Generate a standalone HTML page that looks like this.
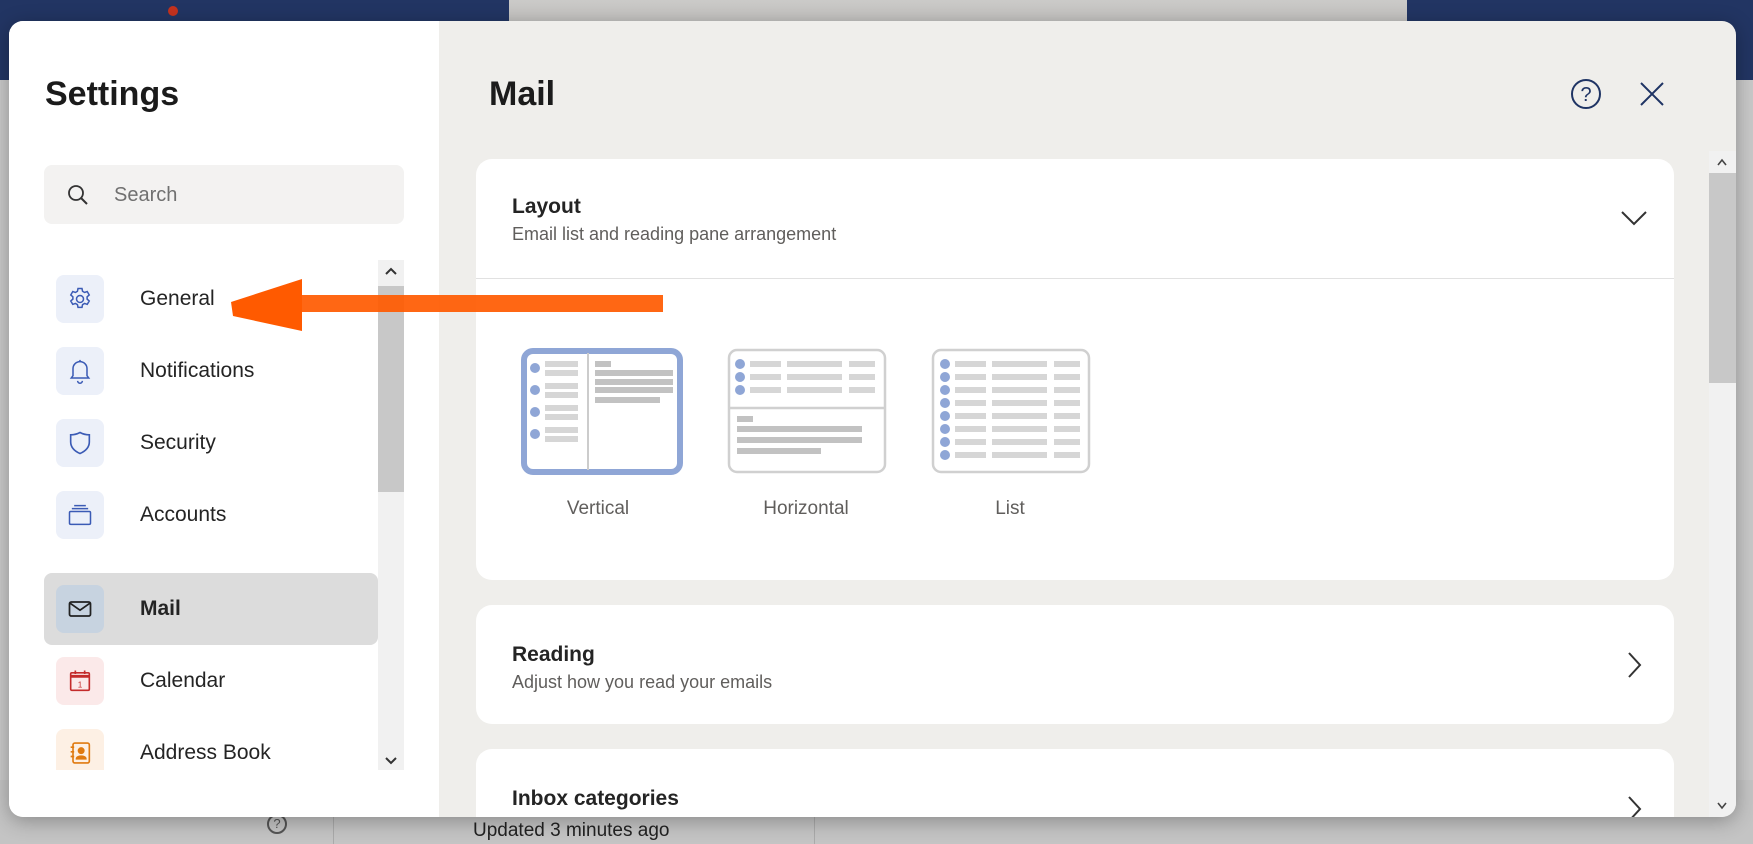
<!DOCTYPE html>
<html><head><meta charset="utf-8"><style>
*{box-sizing:border-box;margin:0;padding:0}
body{width:1753px;height:844px;overflow:hidden;position:relative;background:#c9c9c9;font-family:"Liberation Sans",sans-serif;color:#242424}
.abs{position:absolute}
.nav{left:0;top:0;width:1753px;height:80px;background:#223563}
.topsearch{left:509px;top:0;width:898px;height:40px;background:linear-gradient(#cbcac8,#bdbcba);border-radius:0 0 14px 14px}
.bottom{left:0;top:780px;width:1753px;height:64px;background:#c4c4c4}
.modal{left:9px;top:21px;width:1727px;height:796px;border-radius:14px;overflow:hidden;background:#efeeeb;box-shadow:0 4px 20px rgba(0,0,0,.3)}
.left{left:0;top:0;width:430px;height:796px;background:#fff}
.navitem{position:absolute;left:47px;width:48px;height:48px;border-radius:8px;background:#ecf0f9;display:flex;align-items:center;justify-content:center}
.lbl{position:absolute;left:131px;font-size:21px;color:#242424;line-height:24px}
.card{position:absolute;left:467px;width:1198px;background:#fff;border-radius:16px}
.ct{position:absolute;left:36px;font-size:21px;font-weight:bold;color:#242424}
.cs{position:absolute;left:36px;font-size:18px;color:#605e5c}
.tl{position:absolute;font-size:19px;color:#605e5c;text-align:center;width:180px}
</style></head><body>
<div class="abs nav"></div>
<div class="abs topsearch"></div>
<div class="abs" style="left:168px;top:6px;width:10px;height:10px;border-radius:50%;background:#c4321e"></div>
<div class="abs bottom"></div>
<div class="abs" style="left:333px;top:780px;width:1px;height:64px;background:#aaa"></div>
<div class="abs" style="left:814px;top:780px;width:1px;height:64px;background:#aaa"></div>
<div class="abs" style="left:473px;top:820px;font-size:19px;color:#222">Updated 3 minutes ago</div>
<div class="abs" style="left:267px;top:814px;width:20px;height:20px;border:2px solid #555;border-radius:50%;font-size:13px;text-align:center;line-height:16px;color:#555">?</div>

<div class="abs modal">
 <div class="abs left">
  <div class="abs" style="left:36px;top:54px;font-size:34px;font-weight:bold;color:#1b1b1b">Settings</div>
  <div class="abs" style="left:35px;top:144px;width:360px;height:59px;background:#f3f2f1;border-radius:8px">
   <svg class="abs" style="left:22px;top:18px" width="24" height="24" viewBox="0 0 24 24"><circle cx="10" cy="10" r="7" fill="none" stroke="#333" stroke-width="1.8"/><path d="M15 15l6 6" stroke="#333" stroke-width="2"/></svg>
   <div class="abs" style="left:70px;top:19px;font-size:20px;color:#707070">Search</div>
  </div>
  <div class="abs" style="left:0;top:239px;width:430px;height:510px;overflow:hidden">
   <div class="navitem" style="top:15px"><svg width="28" height="28" viewBox="0 0 24 24" fill="none" stroke="#3b5bb5" stroke-width="1.3"><circle cx="12" cy="12" r="3"/><path d="M10.3 3h3.4l.5 2.4 1.7 1 2.3-.8 1.7 2.9-1.8 1.6v2l1.8 1.6-1.7 2.9-2.3-.8-1.7 1-.5 2.4h-3.4l-.5-2.4-1.7-1-2.3.8-1.7-2.9 1.8-1.6v-2L4.1 8.5l1.7-2.9 2.3.8 1.7-1z"/></svg></div>
   <div class="lbl" style="top:27px">General</div>
   <div class="navitem" style="top:87px"><svg width="28" height="28" viewBox="0 0 24 24" fill="none" stroke="#3b5bb5" stroke-width="1.3"><path d="M6 16V10a6 6 0 0112 0v6l1.5 2h-15z"/><path d="M10 20.5a2 2 0 004 0"/><path d="M12 2.5v1.5"/></svg></div>
   <div class="lbl" style="top:99px">Notifications</div>
   <div class="navitem" style="top:159px"><svg width="28" height="28" viewBox="0 0 24 24" fill="none" stroke="#3b5bb5" stroke-width="1.4"><path d="M12 3c3 1.6 5.5 2 8 2v6c0 5-3.5 8-8 10-4.5-2-8-5-8-10V5c2.5 0 5-.4 8-2z"/></svg></div>
   <div class="lbl" style="top:171px">Security</div>
   <div class="navitem" style="top:231px"><svg width="30" height="28" viewBox="0 0 24 24" fill="none" stroke="#3b5bb5" stroke-width="1.3"><rect x="3" y="9" width="18" height="11" rx="1"/><path d="M5 6.5h14M7 4h10"/></svg></div>
   <div class="lbl" style="top:243px">Accounts</div>
   <div class="abs" style="left:35px;top:313px;width:334px;height:72px;background:#dcdcdc;border-radius:8px"></div>
   <div class="navitem" style="top:325px;background:#c7d3e0"><svg width="30" height="28" viewBox="0 0 24 24" fill="none" stroke="#222" stroke-width="1.5"><rect x="3" y="6" width="18" height="12" rx="1.5"/><path d="M3.5 7l8.5 6 8.5-6"/></svg></div>
   <div class="lbl" style="top:337px;font-weight:bold">Mail</div>
   <div class="navitem" style="top:397px;background:#fbe9e9"><svg width="28" height="28" viewBox="0 0 24 24" fill="none" stroke="#c42b2b" stroke-width="1.4"><rect x="4" y="5" width="16" height="15" rx="1"/><path d="M4 8h16" stroke-width="2.5"/><path d="M8 3v3M16 3v3"/><text x="12" y="17.5" font-size="7" fill="#c42b2b" stroke="none" text-anchor="middle" font-family="Liberation Sans">1</text></svg></div>
   <div class="lbl" style="top:409px">Calendar</div>
   <div class="navitem" style="top:469px;background:#fdf0e4"><svg width="28" height="28" viewBox="0 0 24 24" fill="none" stroke="#e07a10" stroke-width="1.4"><rect x="6" y="3.5" width="14" height="17" rx="1.5"/><circle cx="13" cy="10" r="2.3" fill="#e07a10"/><path d="M9 17c0-3 8-3 8 0z" fill="#e07a10"/><path d="M4 7h3M4 11h3M4 15h3"/></svg></div>
   <div class="lbl" style="top:481px">Address Book</div>
  </div>
  <div class="abs" style="left:369px;top:239px;width:26px;height:510px;background:#f1f1f1"></div>
  <div class="abs" style="left:369px;top:265px;width:26px;height:206px;background:#c8c8c8"></div>
  <svg class="abs" style="left:375px;top:245px" width="14" height="10"><path d="M2 8l5-5 5 5" fill="none" stroke="#333" stroke-width="2"/></svg>
  <svg class="abs" style="left:375px;top:735px" width="14" height="10"><path d="M2 2l5 5 5-5" fill="none" stroke="#333" stroke-width="2"/></svg>
 </div>

 <div class="abs" style="left:480px;top:54px;font-size:34px;font-weight:bold;color:#1b1b1b">Mail</div>
 <svg class="abs" style="left:1560px;top:56px" width="34" height="34" viewBox="0 0 34 34"><circle cx="17" cy="17" r="14" fill="none" stroke="#1f3464" stroke-width="2"/><text x="17" y="24" font-size="20" text-anchor="middle" fill="#1f3464" font-family="Liberation Sans">?</text></svg>
 <svg class="abs" style="left:1630px;top:60px" width="26" height="26"><path d="M2 2l22 22M24 2L2 24" stroke="#1f3464" stroke-width="2"/></svg>

 <div class="card" style="top:138px;height:421px">
  <div class="ct" style="top:36px">Layout</div>
  <div class="cs" style="top:65px">Email list and reading pane arrangement</div>
  <svg class="abs" style="left:1144px;top:50px" width="28" height="18"><path d="M2 3l12 12 12-12" fill="none" stroke="#333" stroke-width="2"/></svg>
  <div class="abs" style="left:0;top:119px;width:1198px;height:1px;background:#e1e1e1"></div>
  <svg class="abs" style="left:0;top:0" width="700" height="421">
   <g transform="translate(-476,-159)">
    <rect x="524" y="351" width="156" height="121" rx="9" fill="#fff" stroke="#8fa6d6" stroke-width="6"/>
    <line x1="588" y1="353" x2="588" y2="470" stroke="#ccc" stroke-width="2"/>
    <g fill="#8fa6d6"><circle cx="535" cy="368" r="5"/><circle cx="535" cy="390" r="5"/><circle cx="535" cy="412" r="5"/><circle cx="535" cy="434" r="5"/></g>
    <g fill="#d6d6d6"><rect x="545" y="361" width="33" height="6"/><rect x="545" y="370" width="33" height="6"/><rect x="545" y="383" width="33" height="6"/><rect x="545" y="392" width="33" height="6"/><rect x="545" y="405" width="33" height="6"/><rect x="545" y="414" width="33" height="6"/><rect x="545" y="427" width="33" height="6"/><rect x="545" y="436" width="33" height="6"/></g>
    <g fill="#c2c2c2"><rect x="595" y="361" width="16" height="6"/><rect x="595" y="370" width="78" height="6"/><rect x="595" y="379" width="78" height="6"/><rect x="595" y="387" width="78" height="6"/><rect x="595" y="397" width="65" height="6"/></g>

    <rect x="729" y="350" width="156" height="122" rx="8" fill="#fff" stroke="#d0d0d0" stroke-width="2.5"/>
    <line x1="729" y1="408" x2="885" y2="408" stroke="#d0d0d0" stroke-width="2.5"/>
    <g fill="#8fa6d6"><circle cx="740" cy="364" r="5"/><circle cx="740" cy="377" r="5"/><circle cx="740" cy="390" r="5"/></g>
    <g fill="#d6d6d6"><rect x="750" y="361" width="31" height="6"/><rect x="787" y="361" width="55" height="6"/><rect x="849" y="361" width="26" height="6"/><rect x="750" y="374" width="31" height="6"/><rect x="787" y="374" width="55" height="6"/><rect x="849" y="374" width="26" height="6"/><rect x="750" y="387" width="31" height="6"/><rect x="787" y="387" width="55" height="6"/><rect x="849" y="387" width="26" height="6"/></g>
    <g fill="#c2c2c2"><rect x="737" y="416" width="16" height="6"/><rect x="737" y="426" width="125" height="6"/><rect x="737" y="437" width="125" height="6"/><rect x="737" y="448" width="84" height="6"/></g>

    <rect x="933" y="350" width="156" height="122" rx="8" fill="#fff" stroke="#d0d0d0" stroke-width="2.5"/>
    <g id="r"><circle cx="945" cy="364" r="5" fill="#8fa6d6"/><rect x="955" y="361" width="31" height="6" fill="#d6d6d6"/><rect x="992" y="361" width="55" height="6" fill="#d6d6d6"/><rect x="1054" y="361" width="26" height="6" fill="#d6d6d6"/></g>
    <use href="#r" y="13"/><use href="#r" y="26"/><use href="#r" y="39"/><use href="#r" y="52"/><use href="#r" y="65"/><use href="#r" y="78"/><use href="#r" y="91"/>
   </g>
  </svg>
  <div class="tl" style="left:32px;top:339px">Vertical</div>
  <div class="tl" style="left:240px;top:339px">Horizontal</div>
  <div class="tl" style="left:444px;top:339px">List</div>
 </div>

 <div class="card" style="top:584px;height:119px">
  <div class="ct" style="top:38px">Reading</div>
  <div class="cs" style="top:67px">Adjust how you read your emails</div>
  <svg class="abs" style="left:1150px;top:46px" width="16" height="28"><path d="M3 2l11 12L3 26" fill="none" stroke="#333" stroke-width="2"/></svg>
 </div>
 <div class="card" style="top:728px;height:120px">
  <div class="ct" style="top:38px">Inbox categories</div>
  <svg class="abs" style="left:1150px;top:46px" width="16" height="28"><path d="M3 2l11 12L3 26" fill="none" stroke="#333" stroke-width="2"/></svg>
 </div>

 <div class="abs" style="left:1700px;top:130px;width:27px;height:666px;background:#f1f1f1"></div>
 <div class="abs" style="left:1700px;top:152px;width:27px;height:210px;background:#c8c8c8"></div>
 <svg class="abs" style="left:1707px;top:136px" width="12" height="10"><path d="M2 8l4-5 4 5" fill="none" stroke="#444" stroke-width="1.6"/></svg>
 <svg class="abs" style="left:1707px;top:780px" width="12" height="10"><path d="M2 2l4 5 4-5" fill="none" stroke="#444" stroke-width="1.6"/></svg>
</div>

<svg class="abs" style="left:0;top:0" width="1753" height="844">
 <rect x="300" y="295" width="363" height="17" fill="#ff5a00" opacity=".92"/>
 <polygon points="231,302 302,279 302,331 233,316" fill="#ff5a00"/>
</svg>
</body></html>
